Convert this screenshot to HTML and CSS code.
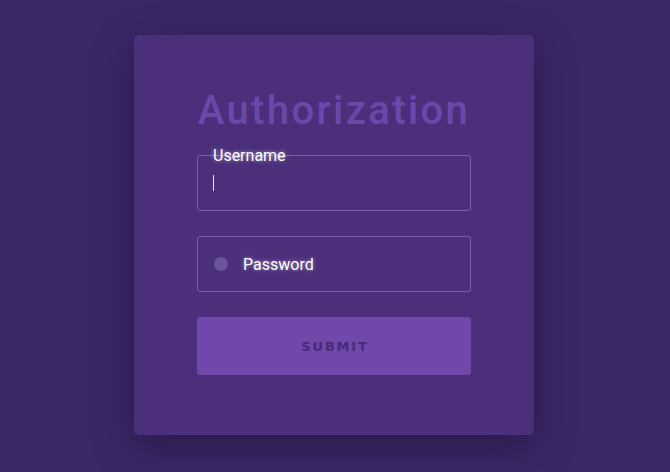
FILE: index.html
```html
<!DOCTYPE html>
<html>
<head>
<meta charset="utf-8">
<link rel="stylesheet" href="styles.css">
</head>
<body>
<div class="card">
  <h1 class="title">Authorization</h1>
  <div class="field">
    <span class="float-label">Username</span>
    <span class="caret"></span>
  </div>
  <div class="field field-pass">
    <span class="dot"></span>
    <span class="placeholder">Password</span>
  </div>
  <button class="submit">SUBMIT</button>
</div>
</body>
</html>
```
FILE: styles.css
```css
html, body {
  margin: 0;
  height: 100%;
}
body {
  box-sizing: border-box;
  padding: 0 2px 2px 0;
  background: #3c2766;
  display: flex;
  align-items: center;
  justify-content: center;
  font-family: Roboto, "Liberation Sans", sans-serif;
}
.card {
  box-sizing: border-box;
  width: 400px;
  height: 400px;
  background: #4b2f7a;
  border-radius: 5px;
  box-shadow: 0 12px 40px rgba(20, 8, 40, 0.45);
  padding: 52px 63px 0 63px;
  display: flex;
  flex-direction: column;
}
.title {
  margin: 0 0 20px 0;
  font-size: 40px;
  line-height: 48px;
  font-weight: 500;
  letter-spacing: 2.4px;
  color: #6a48ab;
  text-align: center;
  white-space: nowrap;
}
.field {
  position: relative;
  box-sizing: border-box;
  height: 56px;
  border: 1px solid #7a5eae;
  border-radius: 3px;
  display: flex;
  align-items: center;
  padding-left: 15px;
  margin-bottom: 25px;
}
.float-label {
  position: absolute;
  left: 15px;
  top: -8px;
  font-size: 16px;
  line-height: 16px;
  color: #fff;
  text-shadow: 0 0 4px rgba(255, 255, 255, 0.55);
}
.caret {
  width: 1px;
  height: 16px;
  background: #e8def8;
}
.field-pass {
  padding-left: 16px;
}
.dot {
  width: 14px;
  height: 14px;
  border-radius: 50%;
  background: #6c5498;
  margin-right: 15px;
}
.placeholder {
  font-size: 16px;
  color: #fff;
  text-shadow: 0 0 4px rgba(255, 255, 255, 0.5);
}
.submit {
  box-sizing: border-box;
  height: 58px;
  border: none;
  border-radius: 3px;
  background: #7048a9;
  color: #472a78;
  font-family: "DejaVu Sans", sans-serif;
  font-weight: bold;
  font-size: 13px;
  letter-spacing: 1.8px;
  padding: 1px 0 0 2px;
}
```
